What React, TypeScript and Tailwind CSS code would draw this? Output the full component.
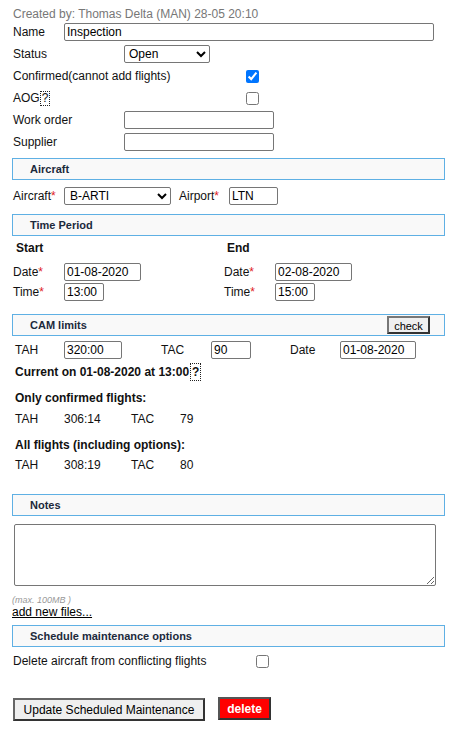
import clsx from "clsx";
import type { ReactNode } from "react";

const field =
  "h-[18px] rounded-[2px] border border-[#767676] bg-white px-[2px] text-[12px] text-black outline-none";

const Req = () => <span className="text-[#e0201b]">*</span>;

const Section = ({
  title,
  children,
  className,
}: {
  title: string;
  children?: ReactNode;
  className?: string;
}) => (
  <div
    className={clsx(
      "flex h-[22px] w-[433px] items-center border border-[#5fb0e4] bg-[#f9f9f9] pl-[17px] pr-[14px] text-[11px] font-bold text-[#1c2a3c]",
      className
    )}
  >
    <span className="flex-1">{title}</span>
    {children}
  </div>
);

const Help = () => (
  <span className="inline-flex h-[15px] items-center border border-dotted border-[#222] px-[1px] leading-none">
    ?
  </span>
);

export default function App() {
  return (
    <div
      className="min-h-[739px] w-[461px] bg-white pl-[12px] pt-[7px] text-[12px] text-[#111]"
      style={{ fontFamily: '"Liberation Sans", Arial, sans-serif' }}
    >
      <div className="pl-[1px] leading-[14px] text-[#777]">
        Created by: Thomas Delta (MAN) 28-05 20:10
      </div>

      {/* general */}
      <div className="pl-[1px]">
        <div className="flex h-[22px] items-center">
          <span className="w-[51px]">Name</span>
          <input className={clsx(field, "w-[370px]")} defaultValue="Inspection" />
        </div>
        <div className="flex h-[22px] items-center">
          <span className="w-[111px]">Status</span>
          <select className={clsx(field, "w-[86px] pl-0")} defaultValue="Open">
            <option>Open</option>
            <option>Closed</option>
          </select>
        </div>
        <div className="flex h-[22px] items-center">
          <span className="w-[233px]">Confirmed(cannot add flights)</span>
          <input type="checkbox" defaultChecked className="h-[13px] w-[13px]" />
        </div>
        <div className="flex h-[22px] items-center">
          <span className="flex w-[233px] items-center">
            AOG
            <Help />
          </span>
          <input type="checkbox" className="h-[13px] w-[13px]" />
        </div>
        <div className="flex h-[22px] items-center">
          <span className="w-[111px]">Work order</span>
          <input className={clsx(field, "w-[150px]")} />
        </div>
        <div className="flex h-[22px] items-center">
          <span className="w-[111px]">Supplier</span>
          <input className={clsx(field, "w-[150px]")} />
        </div>
      </div>

      {/* aircraft */}
      <Section title="Aircraft" className="mt-[5px]" />
      <div className="mt-[5px] flex h-[22px] items-center pl-[1px]">
        <span className="w-[51px]">
          Aircraft
          <Req />
        </span>
        <select className={clsx(field, "w-[107px] pl-[1px]")} defaultValue="B-ARTI">
          <option>B-ARTI</option>
        </select>
        <span className="ml-[8px] w-[50px]">
          Airport
          <Req />
        </span>
        <input className={clsx(field, "w-[49px]")} defaultValue="LTN" />
      </div>

      {/* time period */}
      <Section title="Time Period" className="mt-[7px]" />
      <div className="grid w-[433px] grid-cols-[211px_1fr] pl-[1px]">
        {[
          { title: "Start", date: "01-08-2020", time: "13:00" },
          { title: "End", date: "02-08-2020", time: "15:00" },
        ].map((p) => (
          <div key={p.title}>
            <div className="mt-[1px] flex h-[22px] items-center pl-[3px] font-bold">
              {p.title}
            </div>
            <div className="mt-[3px] flex h-[20px] items-center">
              <span className="w-[51px]">
                Date
                <Req />
              </span>
              <input className={clsx(field, "w-[77px]")} defaultValue={p.date} />
            </div>
            <div className="flex h-[20px] items-center">
              <span className="w-[51px]">
                Time
                <Req />
              </span>
              <input className={clsx(field, "w-[40px]")} defaultValue={p.time} />
            </div>
          </div>
        ))}
      </div>

      {/* CAM limits */}
      <Section title="CAM limits" className="mt-[12px]">
        <button className="h-[18px] w-[43px] border-2 border-[#333] border-l-[#777] border-t-[#777] bg-[#efefef] text-[11px] font-normal text-black">
          check
        </button>
      </Section>
      <div className="pl-[3px]">
        <div className="mt-[3px] flex h-[22px] items-center">
          <span className="w-[49px]">TAH</span>
          <input className={clsx(field, "w-[58px]")} defaultValue="320:00" />
          <span className="ml-[39px] w-[50px]">TAC</span>
          <input className={clsx(field, "w-[40px]")} defaultValue="90" />
          <span className="ml-[39px] w-[50px]">Date</span>
          <input className={clsx(field, "w-[76px]")} defaultValue="01-08-2020" />
        </div>
        <div className="mt-[1px] flex h-[20px] items-center font-bold">
          Current on 01-08-2020 at 13:00
          <span className="ml-[1px] inline-flex h-[18px] items-center border border-dotted border-[#222] px-[1px]">
            ?
          </span>
        </div>
        <div className="mt-[6px] flex h-[20px] items-center font-bold">
          Only confirmed flights:
        </div>
        <div className="mt-[1px] flex h-[20px] items-center">
          <span className="w-[49px]">TAH</span>
          <span className="w-[67px]">306:14</span>
          <span className="w-[49px]">TAC</span>
          <span>79</span>
        </div>
        <div className="mt-[6px] flex h-[20px] items-center font-bold">
          All flights (including options):
        </div>
        <div className="flex h-[20px] items-center">
          <span className="w-[49px]">TAH</span>
          <span className="w-[67px]">308:19</span>
          <span className="w-[49px]">TAC</span>
          <span>80</span>
        </div>
      </div>

      {/* notes */}
      <Section title="Notes" className="mt-[19px]" />
      <textarea className="ml-[2px] mt-[8px] block h-[62px] w-[422px] resize-y rounded-[2px] border border-[#767676] bg-white p-[2px] text-[12px] outline-none" />
      <div className="mt-[9px] text-[9px] italic leading-[10px] text-[#999]">(max. 100MB )</div>
      <div className="leading-[14px] text-black underline">add new files...</div>

      {/* options */}
      <Section title="Schedule maintenance options" className="mt-[6px]" />
      <div className="mt-[2px] flex h-[24px] items-center pl-[1px]">
        <span className="w-[243px]">Delete aircraft from conflicting flights</span>
        <input type="checkbox" className="h-[13px] w-[13px]" />
      </div>

      <div className="mt-[24px] flex items-start gap-[13px] pl-[1px]">
        <button className="mt-[1px] h-[23px] w-[192px] border-2 border-[#333] border-l-[#666] border-t-[#666] bg-[#efefef] text-[12px] text-black">
          Update Scheduled Maintenance
        </button>
        <button className="h-[23px] w-[53px] border-2 border-[#333] border-l-[#555] border-t-[#555] bg-[#ff0000] text-[12px] font-bold text-white">
          delete
        </button>
      </div>
    </div>
  );
}
